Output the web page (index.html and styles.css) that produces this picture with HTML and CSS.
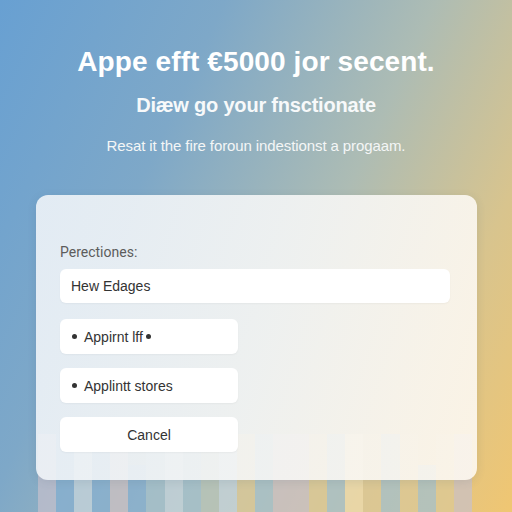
FILE: index.html
```html
<!DOCTYPE html>
<html lang="en">
<head>
    <meta charset="UTF-8">
    <meta name="viewport" content="width=device-width, initial-scale=1.0">
    <title>Appe efft</title>
    <link rel="stylesheet" href="styles.css">
</head>
<body>
    <!-- faded bar strip that sits behind the bottom of the panel -->
    <div class="stripes">
        <span class="s-grey"></span><span class="s-blue"></span><span class="s-pale"></span><span class="s-blue"></span>
        <span class="s-rose"></span><span class="s-blue short"></span><span class="s-teal"></span><span class="s-pale"></span>
        <span class="s-teal"></span><span class="s-sage"></span><span class="s-pale"></span><span class="s-sand"></span>
        <span class="s-teal"></span><span class="s-rose"></span><span class="s-rose"></span><span class="s-sand"></span>
        <span class="s-teal"></span><span class="s-cream"></span><span class="s-sand"></span><span class="s-teal"></span>
        <span class="s-sand"></span><span class="s-teal short"></span><span class="s-sand"></span><span class="s-rose"></span>
    </div>

    <header class="hero">
        <h1>Appe efft €5000 jor secent.</h1>
        <h2>Diæw go your fnsctionate</h2>
        <p>Resat it the fire foroun indestionst a progaam.</p>
    </header>

    <div class="panel">
        <label for="preset">Perectiones:</label>
        <input type="text" id="preset" value="Hew Edages">

        <div class="option-list">
            <button class="option"><span class="dot"></span>Appirnt lff<span class="dot tail"></span></button>
            <button class="option"><span class="dot"></span>Applintt stores</button>
            <button class="option cancel">Cancel</button>
        </div>
    </div>
</body>
</html>
```

FILE: styles.css
```css
/* Full-window gradient backdrop with a centered heading and a frosted panel */
html, body {
    margin: 0;
    height: 100%;
}
body {
    font-family: 'Liberation Sans', Arial, sans-serif;
    width: 512px;
    height: 512px;
    overflow: hidden;
    position: relative;
    background: linear-gradient(115deg, #68a0d2 0%, #7ea8c8 30%, #adbcb4 58%, #d8c48e 80%, #f0c672 100%);
    color: #333;
}

.hero {
    text-align: center;
    color: #fff;
    padding-top: 44px;
}
.hero h1 {
    margin: 0;
    font-size: 28px;
    font-weight: bold;
    letter-spacing: 0.1px;
    line-height: 36px;
}
.hero h2 {
    margin: 13px 0 0;
    font-size: 20px;
    font-weight: bold;
    letter-spacing: -0.2px;
    line-height: 24px;
    color: #f7f9fa;
}
.hero p {
    margin: 20px 0 0;
    font-size: 15px;
    letter-spacing: -0.1px;
    line-height: 18px;
    color: #f4f6f6;
}

/* Frosted panel */
.panel {
    position: relative;
    margin: 40px 35px 0 36px;
    height: 285px;
    box-sizing: border-box;
    padding: 49px 27px 0 24px;
    border-radius: 12px;
    background: linear-gradient(100deg, rgba(238, 243, 248, 0.9) 0%, rgba(245, 246, 246, 0.9) 50%, rgba(253, 248, 240, 0.9) 100%);
    box-shadow: 0 2px 10px rgba(60, 80, 110, 0.12);
}
label {
    display: block;
    font-family: Roboto, 'Liberation Sans', sans-serif;
    font-size: 14px;
    color: #5c5c5c;
    margin-bottom: 9px;
}
input[type="text"] {
    display: block;
    width: 100%;
    height: 34px;
    box-sizing: border-box;
    padding: 0 11px;
    border: none;
    border-radius: 6px;
    background: #fff;
    font-family: 'Liberation Sans', sans-serif;
    font-size: 14px;
    color: #333;
    box-shadow: 0 1px 2px rgba(0, 0, 0, 0.04);
}

.option-list {
    display: flex;
    flex-direction: column;
    gap: 14px;
    margin-top: 16px;
    width: 178px;
}
.option {
    display: flex;
    align-items: center;
    height: 35px;
    padding: 0 12px;
    border: none;
    border-radius: 6px;
    background: #fff;
    font-family: 'Liberation Sans', sans-serif;
    font-size: 14px;
    color: #333;
    text-align: left;
    box-shadow: 0 1px 2px rgba(0, 0, 0, 0.04);
}
.option.cancel {
    justify-content: center;
}
.dot {
    width: 5px;
    height: 5px;
    border-radius: 50%;
    background: #333;
    margin-right: 7px;
}
.dot.tail {
    margin: 0 0 0 3px;
}

/* Decorative bars behind the panel's lower edge */
.stripes {
    position: absolute;
    left: 38px;
    right: 40px;
    bottom: 0;
    height: 78px;
    display: flex;
    align-items: flex-end;
}
.stripes span {
    flex: 1;
    height: 100%;
    opacity: 0.75;
}
.stripes span.short { height: 60%; }
.s-grey { background: #c2bfcc; }
.s-blue { background: #86afd0; }
.s-pale { background: #c6d4dc; }
.s-rose { background: #cbc0c4; }
.s-teal { background: #a4c0cc; }
.s-sage { background: #b8c4b8; }
.s-sand { background: #dcc896; }
.s-cream { background: #efdcae; }
```
